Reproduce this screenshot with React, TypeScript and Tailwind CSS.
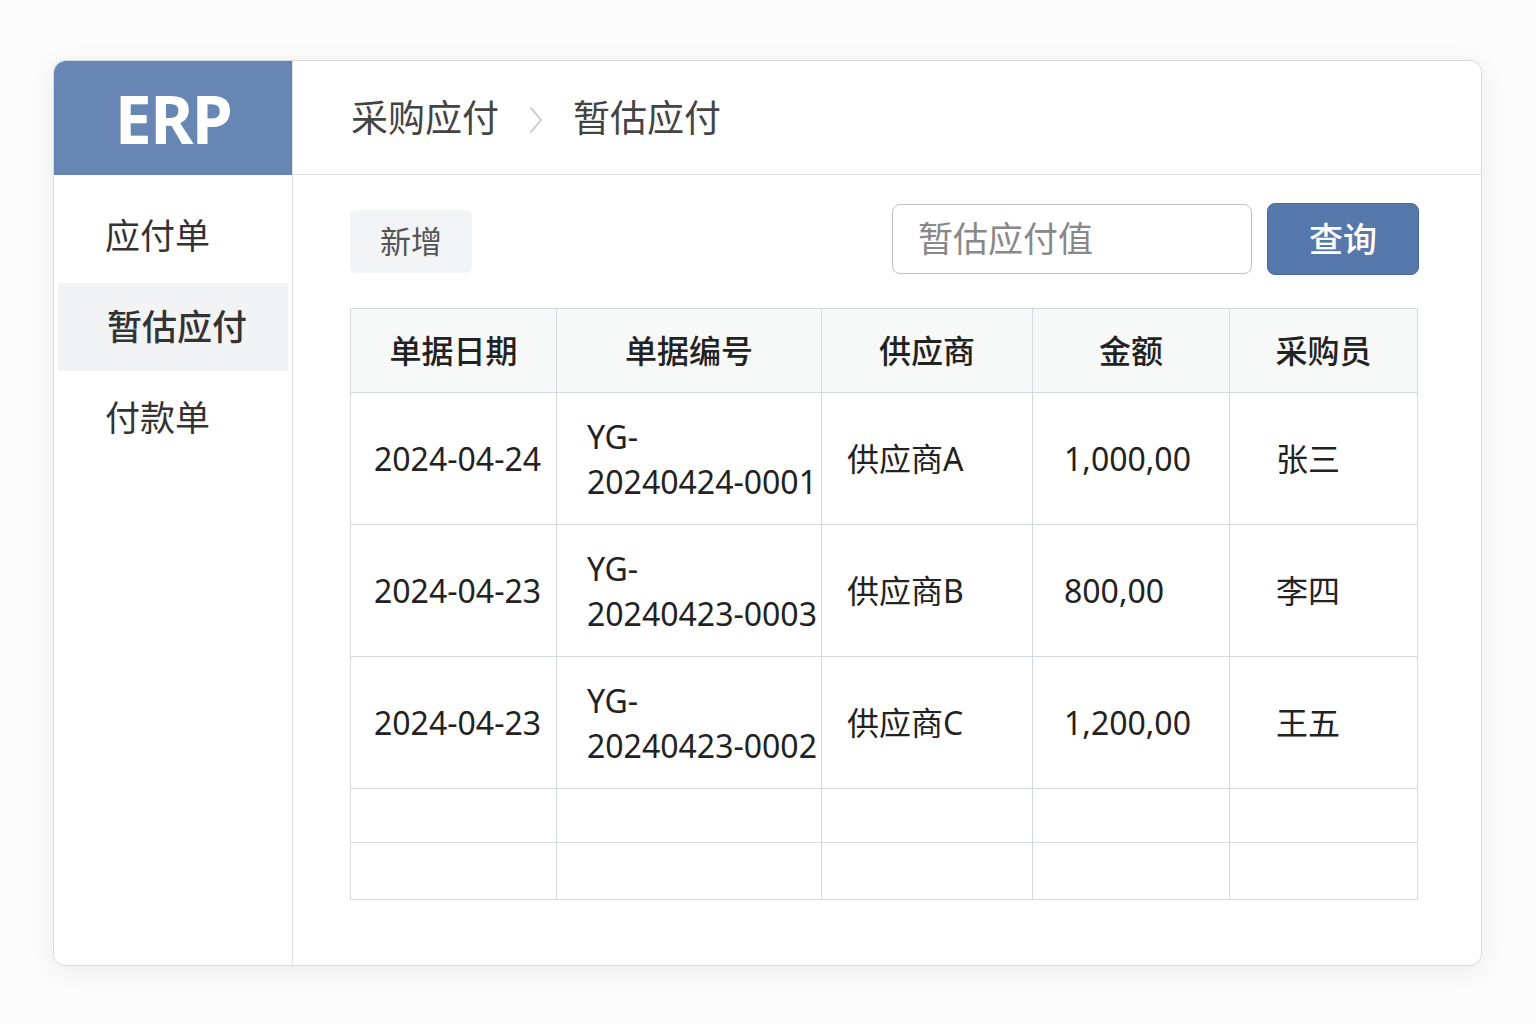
const rows = [
  { date: "2024-04-24", no: ["YG-", "20240424-0001"], supplier: "供应商A", amount: "1,000,00", buyer: "张三" },
  { date: "2024-04-23", no: ["YG-", "20240423-0003"], supplier: "供应商B", amount: "800,00", buyer: "李四" },
  { date: "2024-04-23", no: ["YG-", "20240423-0002"], supplier: "供应商C", amount: "1,200,00", buyer: "王五" },
];

const font = { fontFamily: '"Noto Sans", "Noto Sans CJK SC", sans-serif' };

function Sidebar() {
  const items = ["应付单", "暂估应付", "付款单"];
  return (
    <div className="w-[239px] shrink-0 border-r border-[#dcdfe3] flex flex-col">
      <div className="h-[114px] bg-[#6886b3] rounded-tl-xl flex items-center justify-center">
        <span className="text-white text-[66px] font-bold tracking-tight leading-none">ERP</span>
      </div>
      <nav className="flex flex-col pt-[14px] px-[4px]">
        {items.map((item, i) => (
          <div
            key={item}
            className={
              i === 1
                ? "h-[88px] flex items-center pl-[49px] bg-[#f2f3f5] text-[35px] text-[#333] font-medium"
                : "h-[94px] flex items-center pl-[47px] text-[35px] text-[#333]"
            }
          >
            {item}
          </div>
        ))}
      </nav>
    </div>
  );
}

function Header() {
  return (
    <div className="h-[114px] border-b border-[#dcdfe3] flex items-center pl-[58px] gap-[30px] text-[37px] text-[#444]">
      <span>采购应付</span>
      <svg width="14" height="26" viewBox="0 0 14 26" fill="none" className="mt-[4px]">
        <polyline points="2,1 12,13 2,25" stroke="#cfcfcf" strokeWidth="2" strokeLinecap="round" strokeLinejoin="round" />
      </svg>
      <span>暂估应付</span>
    </div>
  );
}

function Toolbar() {
  return (
    <div className="flex items-center justify-between h-[72px]">
      <button className="h-[63px] w-[122px] mt-[5px] rounded-md bg-[#f3f4f5] text-[31px] text-[#555]">新增</button>
      <div className="flex items-center gap-[15px]">
        <div className="w-[360px] h-[70px] rounded-lg border border-[#bfc3c8] flex items-center pl-[25px] text-[35px] text-[#888]">
          暂估应付值
        </div>
        <button className="w-[152px] h-[72px] rounded-lg bg-[#5577aa] border border-[#4a6a9c] text-white text-[34px] font-medium">
          查询
        </button>
      </div>
    </div>
  );
}

function DataTable() {
  const cell = "border border-[#d3d9dd]";
  return (
    <table className="mt-[33px] w-[1067px] border-collapse table-fixed text-[32px] text-[#222]">
      <colgroup>
        <col className="w-[206px]" />
        <col className="w-[265px]" />
        <col className="w-[211px]" />
        <col className="w-[197px]" />
        <col className="w-[188px]" />
      </colgroup>
      <thead>
        <tr className="h-[84px] bg-[#f7f8f8]">
          {["单据日期", "单据编号", "供应商", "金额", "采购员"].map((h) => (
            <th key={h} className={`${cell} font-medium text-center`}>
              {h}
            </th>
          ))}
        </tr>
      </thead>
      <tbody>
        {rows.map((r, i) => (
          <tr key={i} className="h-[132px]">
            <td className={`${cell} pl-[23px]`}>{r.date}</td>
            <td className={`${cell} pl-[30px] leading-[45px] whitespace-nowrap`}>
              {r.no[0]}
              <br />
              {r.no[1]}
            </td>
            <td className={`${cell} pl-[25px]`}>{r.supplier}</td>
            <td className={`${cell} pl-[31px]`}>{r.amount}</td>
            <td className={`${cell} pl-[46px]`}>{r.buyer}</td>
          </tr>
        ))}
        <tr className="h-[54px]">
          {[0, 1, 2, 3, 4].map((c) => (
            <td key={c} className={cell} />
          ))}
        </tr>
        <tr className="h-[57px]">
          {[0, 1, 2, 3, 4].map((c) => (
            <td key={c} className={cell} />
          ))}
        </tr>
      </tbody>
    </table>
  );
}

export default function App() {
  return (
    <div className="w-[1536px] h-[1024px] bg-[#fbfbfb] pt-[60px] pl-[53px]" style={font}>
      <div className="w-[1429px] h-[906px] bg-white border border-[#d8dbde] rounded-xl shadow-[0_4px_24px_rgba(0,0,0,0.06)] flex overflow-hidden">
        <Sidebar />
        <div className="flex-1 flex flex-col">
          <Header />
          <div className="pl-[57px] pr-[62px] pt-[28px]">
            <Toolbar />
            <DataTable />
          </div>
        </div>
      </div>
    </div>
  );
}
